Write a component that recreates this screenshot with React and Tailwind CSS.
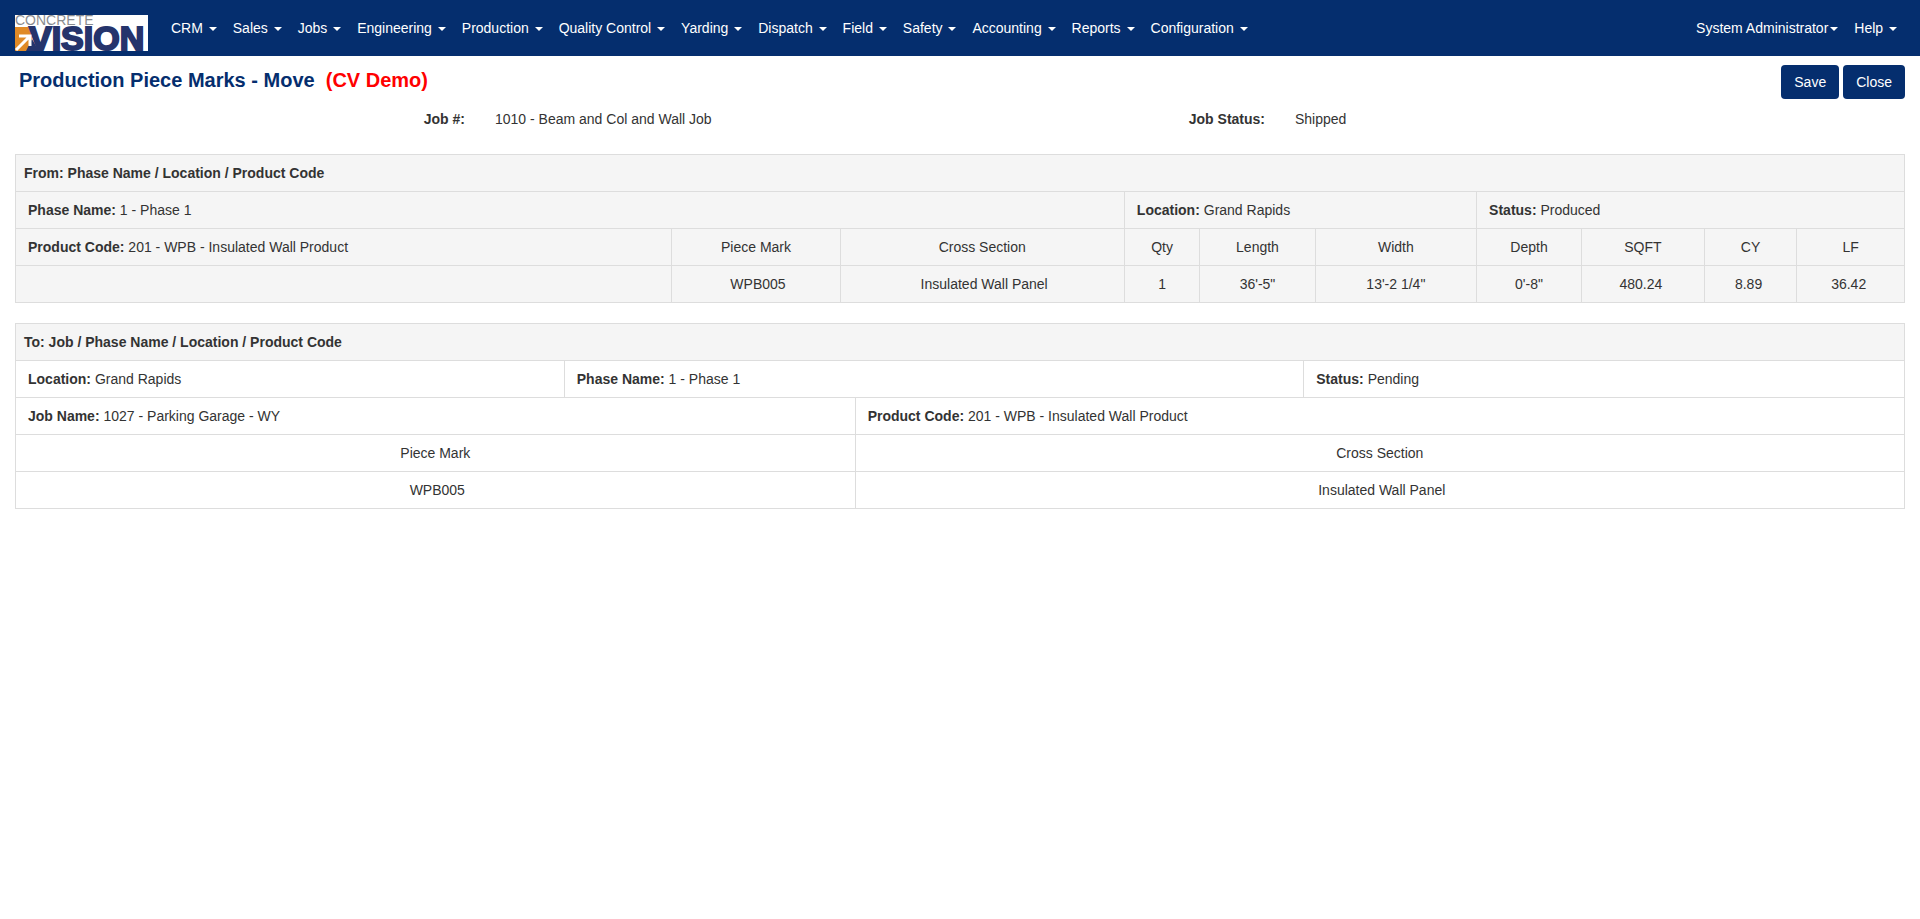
const menus = [
  'CRM', 'Sales', 'Jobs', 'Engineering', 'Production', 'Quality Control', 'Yarding',
  'Dispatch', 'Field', 'Safety', 'Accounting', 'Reports', 'Configuration',
];

const cell = 'border border-[#ddd] py-2';
const infoCell = `${cell} px-3 text-left font-normal`;
const midCell = `${cell} px-2 text-center font-normal`;

function Logo() {
  return (
    <svg className="overflow-visible" width="133" height="36" viewBox="0 0 133 36" role="img" aria-label="Concrete Vision">
      <rect width="133" height="36" fill="#fff" />
      <text x="0" y="10" fontSize="14" fontFamily="Liberation Sans, Arial, sans-serif" fill="#8b8d90">CONCRETE</text>
      <path d="M0 12 H17 V36 H0 Z" fill="#e08a26" />
      <path d="M11 36 L17 24 L24 36 Z" fill="#25346c" />
      <text x="14" y="35" fontSize="34" fontWeight="700" fontFamily="Liberation Sans, Arial, sans-serif" fill="#25346c" stroke="#25346c" strokeWidth="2">VISION</text>
      <path d="M4 21 H15 V31 M14 22 L1 35" fill="none" stroke="#fff" strokeWidth="3" />
    </svg>
  );
}

function Caret() {
  return <span className="ml-0.5 inline-block border-x-4 border-t-4 border-x-transparent border-t-white align-middle" />;
}

function MenuButton({ label, tight }) {
  return (
    <button type="button" className="whitespace-nowrap text-white">
      {label}{!tight && ' '}<Caret />
    </button>
  );
}

function Navbar() {
  return (
    <nav className="flex min-h-14 items-center justify-between bg-[#052e6e] px-[15px]">
      <div className="flex items-center">
        <a href="#" className="mt-[15px] mr-[23px] mb-[5px] block"><Logo /></a>
        <div className="flex flex-wrap gap-x-4">
          {menus.map((m) => <MenuButton key={m} label={m} />)}
        </div>
      </div>
      <div className="flex gap-x-4 pr-2">
        <MenuButton label="System Administrator" tight />
        <MenuButton label="Help" />
      </div>
    </nav>
  );
}

function Info({ label, value }) {
  return <><b>{label}:</b> {value}</>;
}

function FromTable() {
  return (
    <table className="w-full table-fixed border-collapse bg-[#f5f5f5]">
      <colgroup>
        <col className="w-[34.75%]" />
        <col className="w-[8.9%]" />
        <col className="w-[15.05%]" />
        <col className="w-[4%]" />
        <col className="w-[6.1%]" />
        <col className="w-[8.55%]" />
        <col className="w-[5.55%]" />
        <col className="w-[6.5%]" />
        <col className="w-[4.9%]" />
        <col className="w-[5.7%]" />
      </colgroup>
      <thead>
        <tr>
          <th colSpan={10} className={`${cell} px-2 text-left`}>From: Phase Name / Location / Product Code</th>
        </tr>
      </thead>
      <tbody>
        <tr>
          <td colSpan={3} className={infoCell}><Info label="Phase Name" value="1 - Phase 1" /></td>
          <td colSpan={3} className={infoCell}><Info label="Location" value="Grand Rapids" /></td>
          <td colSpan={4} className={infoCell}><Info label="Status" value="Produced" /></td>
        </tr>
        <tr>
          <td className={infoCell}><Info label="Product Code" value="201 - WPB - Insulated Wall Product" /></td>
          {['Piece Mark', 'Cross Section', 'Qty', 'Length', 'Width', 'Depth', 'SQFT', 'CY', 'LF'].map((h) => (
            <th key={h} className={midCell}>{h}</th>
          ))}
        </tr>
        <tr>
          <td className={infoCell} />
          <td className={midCell}>&nbsp;WPB005</td>
          <td className={midCell}>&nbsp;Insulated Wall Panel</td>
          <td className={midCell}>1</td>
          <td className={midCell}>36'-5"</td>
          <td className={midCell}>13'-2 1/4"</td>
          <td className={midCell}>0'-8"</td>
          <td className={midCell}>480.24&nbsp;</td>
          <td className={midCell}>8.89&nbsp;</td>
          <td className={midCell}>36.42&nbsp;</td>
        </tr>
      </tbody>
    </table>
  );
}

function ToTable() {
  return (
    <table className="mt-5 w-full table-fixed border-collapse">
      <colgroup>
        <col className="w-[29.05%]" />
        <col className="w-[15.4%]" />
        <col className="w-[23.75%]" />
        <col className="w-[31.8%]" />
      </colgroup>
      <thead>
        <tr className="bg-[#f5f5f5]">
          <th colSpan={4} className={`${cell} px-2 text-left`}>To: Job / Phase Name / Location / Product Code</th>
        </tr>
      </thead>
      <tbody>
        <tr>
          <td className={infoCell}><Info label="Location" value="Grand Rapids" /></td>
          <td colSpan={2} className={infoCell}><Info label="Phase Name" value="1 - Phase 1" /></td>
          <td className={infoCell}><Info label="Status" value="Pending" /></td>
        </tr>
        <tr>
          <td colSpan={2} className={infoCell}><Info label="Job Name" value="1027 - Parking Garage - WY" /></td>
          <td colSpan={2} className={infoCell}><Info label="Product Code" value="201 - WPB - Insulated Wall Product" /></td>
        </tr>
        <tr>
          <th colSpan={2} className={midCell}>Piece Mark</th>
          <th colSpan={2} className={midCell}>Cross Section</th>
        </tr>
        <tr>
          <td colSpan={2} className={midCell}>&nbsp;WPB005</td>
          <td colSpan={2} className={midCell}>&nbsp;Insulated Wall Panel</td>
        </tr>
      </tbody>
    </table>
  );
}

export default function App() {
  const btn = 'rounded bg-[#052e6e] px-[13px] py-[7px] text-white';

  return (
    <div className="min-h-screen bg-white font-['Liberation_Sans',Arial,sans-serif] text-[14px] leading-5 text-[#333]">
      <Navbar />

      <header className="flex items-start justify-between px-[15px] pt-[9px]">
        <h1 className="pl-1 pt-1 text-[20px] leading-[22px] font-bold text-[#052e6e]">
          Production Piece Marks - Move&nbsp; <span className="text-[#f00]">(CV Demo)</span>
        </h1>
        <div className="flex gap-1">
          <button type="button" className={btn}>Save</button>
          <button type="button" className={btn}>Close</button>
        </div>
      </header>

      <dl className="mt-2.5 grid grid-cols-12">
        <dt className="col-span-3 px-[15px] text-right font-bold">Job #:</dt>
        <dd className="col-span-3 px-[15px]">1010 - Beam and Col and Wall Job</dd>
        <dt className="col-span-2 px-[15px] text-right font-bold">Job Status:</dt>
        <dd className="col-span-4 px-[15px]">Shipped</dd>
      </dl>

      <main className="px-[15px] pt-[25px]">
        <FromTable />
        <ToTable />
      </main>
    </div>
  );
}
